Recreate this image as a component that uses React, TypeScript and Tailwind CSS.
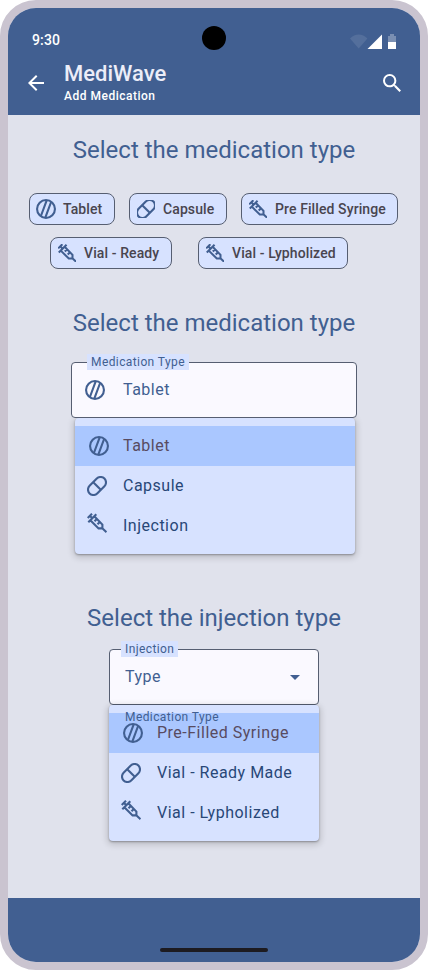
import React from "react";

type IconProps = { className?: string; viewBox?: string };

function TabletIcon({ className = "" }: IconProps) {
  return (
    <svg viewBox="0 0 20 20" className={`shrink-0 ${className}`} fill="none" stroke="currentColor" strokeWidth="2.1">
      <circle cx="10" cy="10" r="8.95" />
      <path d="M4.9 17 10.6 1.6M9.4 18.4 15.1 3" />
    </svg>
  );
}

function PillIcon({ className = "", viewBox = "0 0 20 20" }: IconProps) {
  return (
    <svg viewBox={viewBox} className={`shrink-0 ${className}`} fill="none" stroke="currentColor" strokeWidth="2.1">
      <rect x="-0.5" y="4.6" width="21" height="10.8" rx="5.4" transform="rotate(-45 10 10)" />
      <path d="m6.2 6.2 7.6 7.6" />
    </svg>
  );
}

function SyringeIcon({ className = "", viewBox = "0 0 20 20" }: IconProps) {
  return (
    <svg viewBox={viewBox} className={`shrink-0 ${className}`} fill="none" stroke="currentColor" strokeWidth="2.1">
      <path d="M.7 5 5 .7M2.8 2.8l3 3M1.3 9.3 9.3 1.3M3.3 7.3l8.3 8.1h3.8v-3.8L7.3 3.3M15 15l4.5 4.1M9.9 5.9 7.5 8.3M12.9 8.9 10.5 11.3" />
    </svg>
  );
}

const icons = { tablet: TabletIcon, pill: PillIcon, syringe: SyringeIcon };
type IconName = keyof typeof icons;

function Chip({ icon, label, width }: { icon: IconName; label: string; width: string }) {
  const Icon = icons[icon];
  return (
    <button className={`flex h-8 items-center rounded-lg border border-[#565e71] bg-[#d7e2ff] pl-1.5 ${width}`}>
      <span className="flex w-5 shrink-0 justify-center">
        <Icon className={icon === "tablet" ? "size-5" : "size-[18px]"} viewBox={icon === "pill" ? "1 1 18 18" : "0.5 0.5 18.5 18.5"} />
      </span>
      <span className="ml-[7px] whitespace-nowrap text-sm font-medium tracking-[0.1px] text-[#49454f]">{label}</span>
    </button>
  );
}

function MenuRow({ icon, label, selected = false }: { icon: IconName; label: string; selected?: boolean }) {
  const Icon = icons[icon];
  return (
    <li className={`flex h-10 items-center pl-3 ${selected ? "bg-[#aac7ff]" : ""}`}>
      <span className={`flex w-6 shrink-0 ${selected ? "pl-0.5" : ""}`}>
        <Icon className={icon === "syringe" ? "-mt-1.5 size-5" : "size-5"} />
      </span>
      <span className={`ml-3 whitespace-nowrap text-base tracking-[0.5px] ${selected ? "text-[#584b61]" : "text-[#284777]"}`}>{label}</span>
    </li>
  );
}

function Title({ children, className = "" }: { children: React.ReactNode; className?: string }) {
  return <h2 className={`text-center text-2xl leading-8 ${className}`}>{children}</h2>;
}

const fieldLabel = "absolute -top-[9px] h-4 bg-[#d7e2ff] px-1 text-xs leading-4 tracking-[0.4px]";
const menu = "rounded bg-[#d7e2ff] pt-2 pb-2 shadow-[0_1px_2px_rgba(0,0,0,0.3),0_2px_6px_2px_rgba(0,0,0,0.15)]";

export default function App() {
  return (
    <div className="h-[970px] w-[428px] bg-white font-['Roboto',sans-serif] text-[#415f91]">
      <div className="flex h-full flex-col overflow-hidden rounded-[36px] border-8 border-[#cac4d0] bg-[#e0e2ec]">
        <header className="relative h-[107px] shrink-0 bg-[#415f91] text-white">
          <div className="absolute top-[18px] left-[194px] size-6 rounded-full bg-black" />
          <div className="flex h-[52px] items-end justify-between pr-6 pb-2.5 pl-6">
            <span className="text-sm leading-5 font-medium tracking-[0.14px]">9:30</span>
            <svg width="46" height="15" viewBox="0 0 46 15" className="mb-px" fill="white">
              <path d="M0 4.5C5-1 12.4-1 17.4 4.5L8.7 14.5Z" opacity=".1" />
              <path d="M17.5 15 32 .5V15Z" />
              <path d="M38 2h2V0h4v2h2v6h-8Z" opacity=".3" />
              <path d="M38 8h8v7h-8Z" />
            </svg>
          </div>
          <div className="flex">
            <svg width="16" height="16" viewBox="4 4 16 16" className="mt-[15px] ml-5" fill="white">
              <path d="M20 11H7.83l5.59-5.59L12 4l-8 8 8 8 1.41-1.41L7.83 13H20v-2z" />
            </svg>
            <div className="ml-5">
              <h1 className="text-[22px] leading-7 font-medium text-[#ecedf8]">MediWave</h1>
              <p className="text-xs leading-4 font-medium tracking-[0.5px]">Add Medication</p>
            </div>
            <svg width="18" height="18" viewBox="3 3 17.5 17.5" className="mt-3.5 mr-[19px] ml-auto" fill="white">
              <path d="M15.5 14h-.79l-.28-.27A6.471 6.471 0 0 0 16 9.5 6.5 6.5 0 1 0 9.5 16c1.61 0 3.09-.59 4.23-1.57l.27.28v.79l5 4.99L20.49 19l-4.99-5zm-6 0C7.01 14 5 11.99 5 9.5S7.01 5 9.5 5 14 7.01 14 9.5 11.99 14 9.5 14z" />
            </svg>
          </div>
        </header>

        <main className="flex-1 pt-[19px]">
          <Title>Select the medication type</Title>
          <div className="mt-[27px] ml-[21px] flex gap-3.5">
            <Chip icon="tablet" label="Tablet" width="w-[86px]" />
            <Chip icon="pill" label="Capsule" width="w-[98px]" />
            <Chip icon="syringe" label="Pre Filled Syringe" width="w-[157px]" />
          </div>
          <div className="mt-3 ml-[42px] flex gap-[26px]">
            <Chip icon="syringe" label="Vial - Ready" width="w-[122px]" />
            <Chip icon="syringe" label="Vial - Lypholized" width="w-[150px]" />
          </div>

          <Title className="mt-[38px]">Select the medication type</Title>
          <div className="relative mt-[23px] ml-[63px] flex h-14 w-[286px] items-center rounded border border-[#565e71] bg-[#faf9ff] pl-[13px]">
            <span className={`left-[15px] ${fieldLabel}`}>Medication Type</span>
            <TabletIcon className="size-5" />
            <span className="ml-[18px] text-base tracking-[0.5px]">Tablet</span>
          </div>
          <ul className={`ml-[67px] h-[136px] w-[280px] ${menu}`}>
            <MenuRow icon="tablet" label="Tablet" selected />
            <MenuRow icon="pill" label="Capsule" />
            <MenuRow icon="syringe" label="Injection" />
          </ul>

          <Title className="mt-12">Select the injection type</Title>
          <div className="relative mt-[15px] ml-[101px] flex h-14 w-[210px] items-center justify-between rounded border border-[#565e71] bg-[#faf9ff] pr-[18px] pl-[15px]">
            <span className={`left-[11px] ${fieldLabel}`}>Injection</span>
            <span className="text-base tracking-[0.5px]">Type</span>
            <svg width="10" height="5" viewBox="0 0 10 5" fill="currentColor"><path d="M0 0h10L5 5Z" /></svg>
          </div>
          <div className="relative ml-[101px] w-[210px]">
            <ul className={`h-[136px] ${menu}`}>
              <MenuRow icon="tablet" label="Pre-Filled Syringe" selected />
              <MenuRow icon="pill" label="Vial - Ready Made" />
              <MenuRow icon="syringe" label="Vial - Lypholized" />
            </ul>
            <span className="absolute top-1 left-4 text-xs leading-4 tracking-[0.4px]">Medication Type</span>
          </div>
        </main>

        <footer className="flex h-16 shrink-0 items-end justify-center bg-[#415f91] pb-2.5">
          <div className="h-1 w-[108px] rounded-full bg-[#1d1b20]" />
        </footer>
      </div>
    </div>
  );
}
